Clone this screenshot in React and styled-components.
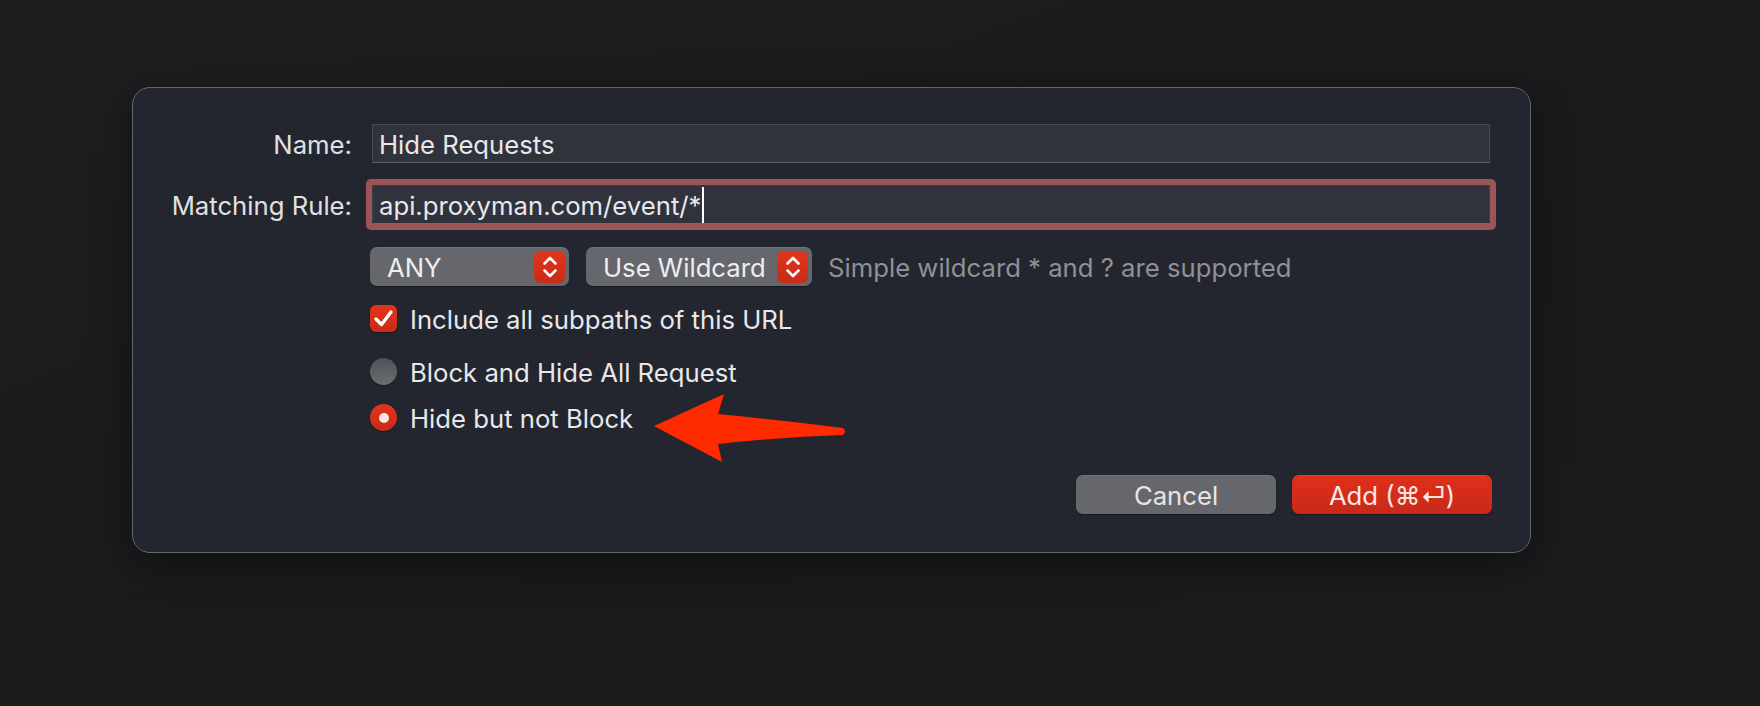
import React from "react";
import styled, { createGlobalStyle } from "styled-components";

const GlobalStyle = createGlobalStyle`
  html, body {
    margin: 0;
    padding: 0;
    background: #1c1b1d;
  }
  body {
    font-family: Inter, "Noto Sans", "DejaVu Sans", sans-serif;
    -webkit-font-smoothing: antialiased;
  }
`;

export default function App() {
  return (
    <>
      <GlobalStyle />
      <Page>
        <Dialog>
          <Form>
            <Label>Name:</Label>
            <TextField>
              <FieldText>Hide Requests</FieldText>
            </TextField>

            <Label>Matching Rule:</Label>
            <FocusRing>
              <TextField $focused>
                <FieldText>api.proxyman.com/event/*</FieldText>
                <Caret />
              </TextField>
            </FocusRing>

            <Options>
              <PopupRow>
                <Popup $width={199}>
                  ANY
                  <Stepper>
                    <StepperIcon />
                  </Stepper>
                </Popup>
                <Popup $width={226}>
                  Use Wildcard
                  <Stepper>
                    <StepperIcon />
                  </Stepper>
                </Popup>
                <Hint>Simple wildcard * and ? are supported</Hint>
              </PopupRow>

              <CheckRow>
                <Checkbox>
                  <svg width="21" height="19" viewBox="0 0 21 19">
                    <path
                      d="M3 10 L8.5 15.5 L18 3"
                      fill="none"
                      stroke="#fff"
                      strokeWidth="3.4"
                      strokeLinecap="round"
                      strokeLinejoin="round"
                    />
                  </svg>
                </Checkbox>
                <OptionText>Include all subpaths of this URL</OptionText>
              </CheckRow>

              <RadioGroup>
                <RadioRow>
                  <Radio />
                  <OptionText>Block and Hide All Request</OptionText>
                </RadioRow>
                <RadioRow>
                  <Radio $checked />
                  <OptionText>Hide but not Block</OptionText>
                </RadioRow>
              </RadioGroup>
            </Options>
          </Form>

          <Footer>
            <Button>Cancel</Button>
            <Button $primary>Add (⌘⏎)</Button>
          </Footer>

          <Arrow width="200" height="75" viewBox="0 0 200 75">
            <path
              d="M3 35 L73 3 L67 23 Q130 29 192 37 Q196 40.5 192 44 Q130 46 67 53 L71 71 Z"
              fill="#ff2a00"
            />
          </Arrow>
        </Dialog>
      </Page>
    </>
  );
}

function StepperIcon() {
  return (
    <svg width="18" height="26" viewBox="0 0 18 26">
      <path
        d="M3.5 9.5 L9 4 L14.5 9.5 M3.5 16.5 L9 22 L14.5 16.5"
        fill="none"
        stroke="#fff"
        strokeWidth="2.6"
        strokeLinecap="round"
        strokeLinejoin="round"
      />
    </svg>
  );
}

const Page = styled.div`
  width: 1760px;
  height: 706px;
  box-sizing: border-box;
  padding: 87px 0 0 132px;
  background: linear-gradient(160deg, #1e1d1f 0%, #1a191b 60%, #1c1b1d 100%);
  overflow: hidden;
`;

const Dialog = styled.div`
  position: relative;
  width: 1399px;
  box-sizing: border-box;
  padding: 36px 40px 38px 40px;
  background: #23262e;
  border: 1px solid #63666c;
  border-radius: 18px;
  box-shadow: 0 10px 40px rgba(0, 0, 0, 0.4);
  color: #e3e3e5;
`;

const Form = styled.div`
  display: grid;
  grid-template-columns: 179px 1fr;
  column-gap: 20px;
  row-gap: 22px;
  align-items: center;
`;

const Label = styled.div`
  display: flex;
  justify-content: flex-end;
  white-space: nowrap;
  font-size: 25.7px;
  padding-top: 2px;
  color: #e0e0e2;
`;

const TextField = styled.div`
  position: relative;
  display: flex;
  align-items: center;
  height: 39px;
  box-sizing: border-box;
  padding: 2px 6px 0;
  background: #30333c;
  border: 1px solid ${(p) => (p.$focused ? "#3c3f47" : "#464950")};
  border-bottom-color: ${(p) => (p.$focused ? "#6a6d73" : "#5c5f66")};
`;

const FocusRing = styled.div`
  margin: -6px -6px;
  padding: 6px;
  background: #9c5459;
  border-radius: 5px;
`;

const FieldText = styled.span`
  font-size: 25.7px;
  color: #e8e8ea;
  white-space: nowrap;
`;

const Caret = styled.span`
  width: 2px;
  height: 36px;
  margin-left: 1px;
  margin-top: -2px;
  background: #ffffff;
`;

const Options = styled.div`
  grid-column: 2;
  display: flex;
  flex-direction: column;
  margin-left: -2px;
`;

const PopupRow = styled.div`
  display: flex;
  align-items: center;
  gap: 17px;
  margin-top: 1px;
`;

const Popup = styled.div`
  position: relative;
  display: flex;
  align-items: center;
  width: ${(p) => p.$width}px;
  height: 39px;
  box-sizing: border-box;
  padding: 2px 0 0 17px;
  background: #65676c;
  border-radius: 7px;
  box-shadow: inset 0 1px 0 rgba(255, 255, 255, 0.08), 0 1px 1px rgba(0, 0, 0, 0.35);
  font-size: 25.7px;
  color: #eeeeef;
  white-space: nowrap;
`;

const Stepper = styled.div`
  position: absolute;
  right: 4px;
  top: 4px;
  width: 31px;
  height: 32px;
  display: flex;
  align-items: center;
  justify-content: center;
  border-radius: 6px;
  background: linear-gradient(#e2351b, #c82b17);
`;

const Hint = styled.span`
  margin-left: -1px;
  padding-top: 2px;
  font-size: 25.7px;
  color: #8f9196;
  white-space: nowrap;
`;

const CheckRow = styled.div`
  display: flex;
  align-items: center;
  gap: 13px;
  margin-top: 19px;
  height: 27px;
`;

const Checkbox = styled.div`
  width: 27px;
  height: 27px;
  display: flex;
  align-items: center;
  justify-content: center;
  border-radius: 6px;
  background: linear-gradient(#e2351b, #c92b17);
  box-shadow: 0 1px 1px rgba(0, 0, 0, 0.4);
`;

const OptionText = styled.span`
  font-size: 25.7px;
  padding-top: 2px;
  color: #e8e8ea;
  white-space: nowrap;
`;

const RadioGroup = styled.div`
  display: flex;
  flex-direction: column;
  gap: 19px;
  margin-top: 26px;
`;

const RadioRow = styled.div`
  display: flex;
  align-items: center;
  gap: 13px;
  height: 27px;
`;

const Radio = styled.div`
  width: 27px;
  height: 27px;
  border-radius: 50%;
  display: flex;
  align-items: center;
  justify-content: center;
  box-sizing: border-box;
  background: ${(p) =>
    p.$checked
      ? "linear-gradient(#e2351b, #c62a17)"
      : "linear-gradient(#4f5156, #6b6d71)"};
  box-shadow: 0 1px 1px rgba(0, 0, 0, 0.4);

  &::after {
    content: "";
    display: ${(p) => (p.$checked ? "block" : "none")};
    width: 10px;
    height: 10px;
    border-radius: 50%;
    background: #fde6e3;
  }
`;

const Footer = styled.div`
  display: flex;
  justify-content: flex-end;
  gap: 16px;
  margin-top: 44px;
  margin-right: -2px;
`;

const Button = styled.button`
  width: 200px;
  height: 39px;
  padding-top: 2px;
  border: none;
  border-radius: 7px;
  font-family: Inter, "DejaVu Sans", sans-serif;
  font-size: 25.7px;
  color: ${(p) => (p.$primary ? "#fbe8e4" : "#e6e6e8")};
  background: ${(p) =>
    p.$primary ? "linear-gradient(#e0301a, #c8291a)" : "#66676c"};
  box-shadow: inset 0 1px 0 rgba(255, 255, 255, 0.08), 0 1px 1px rgba(0, 0, 0, 0.35);
  cursor: pointer;
`;

const Arrow = styled.svg`
  position: absolute;
  left: 518px;
  top: 303px;
`;
